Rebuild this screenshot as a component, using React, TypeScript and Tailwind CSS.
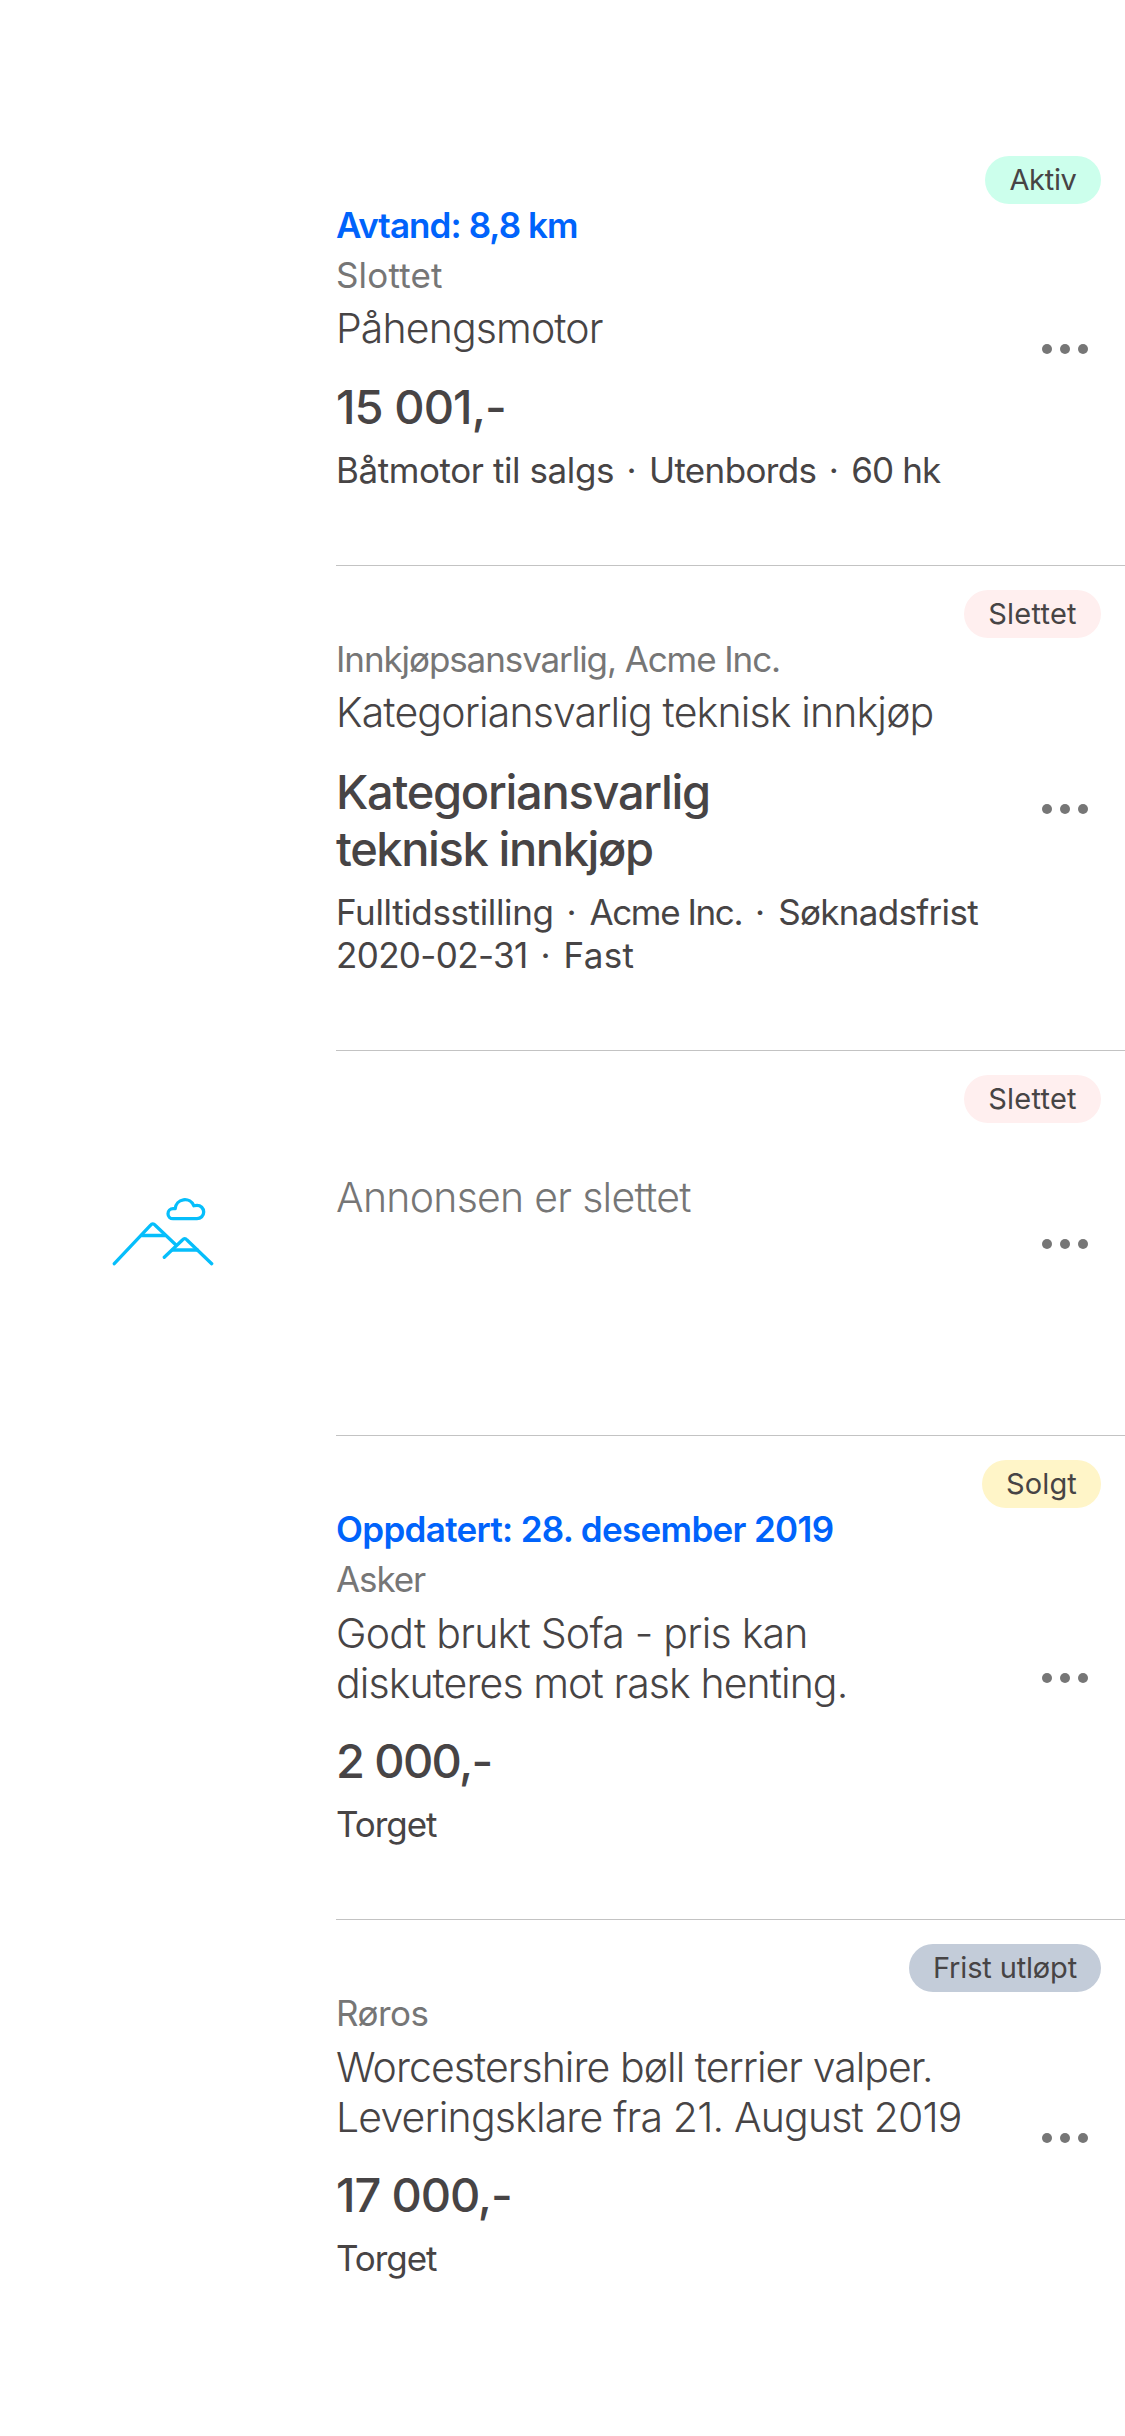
import { Fragment } from "react";
import clsx from "clsx";

type Segment = { text: string; tracking: string };

type Ad = {
  id: string;
  height: string;
  badge: { text: string; style: string };
  status?: Segment;
  location?: Segment;
  title: Segment[];
  titlePadding: string;
  price?: Segment[];
  pricePadding?: string;
  details?: Segment[][];
  dotWidth?: string;
  deleted?: boolean;
};

const ads: Ad[] = [
  {
    id: "motor",
    height: "h-[434px]",
    badge: { text: "Aktiv", style: "w-[116px] bg-[#ccffec] tracking-[-0.3px]" },
    status: { text: "Avtand: 8,8 km", tracking: "tracking-[-0.93px]" },
    location: { text: "Slottet", tracking: "tracking-[0.16px]" },
    title: [{ text: "Påhengsmotor", tracking: "tracking-[-0.88px]" }],
    titlePadding: "pt-[3px]",
    price: [{ text: "15 001,-", tracking: "tracking-[-0.93px]" }],
    pricePadding: "pt-[25px]",
    details: [
      [
        { text: "Båtmotor til salgs", tracking: "tracking-[-0.42px]" },
        { text: "Utenbords", tracking: "tracking-[-0.65px]" },
        { text: "60 hk", tracking: "tracking-[-0.9px]" },
      ],
    ],
    dotWidth: "w-[35px]",
  },
  {
    id: "job",
    height: "h-[485px]",
    badge: { text: "Slettet", style: "w-[137px] bg-[#ffefef] tracking-[0.26px]" },
    location: { text: "Innkjøpsansvarlig, Acme Inc.", tracking: "tracking-[-1.09px]" },
    title: [{ text: "Kategoriansvarlig teknisk innkjøp", tracking: "tracking-[-0.84px]" }],
    titlePadding: "pt-[3px]",
    price: [
      { text: "Kategoriansvarlig", tracking: "tracking-[-1.28px]" },
      { text: "teknisk innkjøp", tracking: "tracking-[-1.4px]" },
    ],
    pricePadding: "pt-[26px]",
    details: [
      [
        { text: "Fulltidsstilling", tracking: "tracking-[-0.37px]" },
        { text: "Acme Inc.", tracking: "tracking-[-1.4px]" },
        { text: "Søknadsfrist", tracking: "tracking-[-0.68px]" },
      ],
      [
        { text: "2020-02-31", tracking: "tracking-[-0.64px]" },
        { text: "Fast", tracking: "tracking-[0.36px]" },
      ],
    ],
    dotWidth: "w-[36px]",
  },
  {
    id: "deleted",
    height: "h-[385px]",
    badge: { text: "Slettet", style: "w-[137px] bg-[#ffefef] tracking-[0.26px]" },
    title: [{ text: "Annonsen er slettet", tracking: "tracking-[-0.73px]" }],
    titlePadding: "pt-[53px]",
    deleted: true,
  },
  {
    id: "sofa",
    height: "h-[484px]",
    badge: { text: "Solgt", style: "w-[119px] bg-[#fff5c8] tracking-[0.1px]" },
    status: { text: "Oppdatert: 28. desember 2019", tracking: "tracking-[-0.67px]" },
    location: { text: "Asker", tracking: "tracking-[-1.1px]" },
    title: [
      { text: "Godt brukt Sofa - pris kan", tracking: "tracking-[-0.75px]" },
      { text: "diskuteres mot rask henting.", tracking: "tracking-[-0.92px]" },
    ],
    titlePadding: "pt-[4px]",
    price: [{ text: "2 000,-", tracking: "tracking-[-1.65px]" }],
    pricePadding: "pt-[24px]",
    details: [[{ text: "Torget", tracking: "tracking-[-1.06px]" }]],
  },
  {
    id: "puppies",
    height: "h-[434px]",
    badge: { text: "Frist utløpt", style: "w-[192px] bg-[#c3ccd9] tracking-[-0.15px]" },
    location: { text: "Røros", tracking: "tracking-[-0.5px]" },
    title: [
      { text: "Worcestershire bøll terrier valper.", tracking: "tracking-[-0.96px]" },
      { text: "Leveringsklare fra 21. August 2019", tracking: "tracking-[-0.83px]" },
    ],
    titlePadding: "pt-[4px]",
    price: [{ text: "17 000,-", tracking: "tracking-[-1.13px]" }],
    pricePadding: "pt-[24px]",
    details: [[{ text: "Torget", tracking: "tracking-[-1.06px]" }]],
  },
];

function MountainIcon() {
  return (
    <svg
      className="h-[72px] w-[102px]"
      viewBox="0 0 102 72"
      fill="none"
      stroke="#06befb"
      strokeWidth="3.3"
      strokeLinecap="round"
      strokeLinejoin="round"
    >
      <path d="M61 23.7A5 5 0 0 1 61 13.7H63.2A9.7 9.7 0 0 1 81.9 10.8Q83.4 10.3 85 10.3A6.7 6.7 0 0 1 85 23.7Z" />
      <path d="M2.3 68.7L38.4 30.4Q40.7 27.4 43.2 30.2L64 50" />
      <path d="M29.7 40.5H53" />
      <path d="M52.3 62.3L70.4 45Q72.7 42.4 75 45L99.7 68.7" />
      <path d="M60.7 55H85.3" />
    </svg>
  );
}

function MoreButton() {
  return (
    <button aria-label="Flere valg" className="flex shrink-0 items-center gap-2 pt-px">
      <span className="size-2.5 rounded-full bg-[#767676]" />
      <span className="size-2.5 rounded-full bg-[#767676]" />
      <span className="size-2.5 rounded-full bg-[#767676]" />
    </button>
  );
}

function AdRow({ ad, last }: { ad: Ad; last: boolean }) {
  return (
    <li className={clsx("flex", ad.height)}>
      <div className="w-[336px] shrink-0 pt-36 pl-28">{ad.deleted && <MountainIcon />}</div>
      <div
        className={clsx(
          "relative flex flex-1 items-center justify-between pr-[37px]",
          !last && "border-b border-[#c3c3c3]",
        )}
      >
        <span
          className={clsx(
            "absolute top-6 right-6 flex h-12 items-center justify-center rounded-full text-[29px] whitespace-nowrap",
            ad.badge.style,
          )}
        >
          {ad.badge.text}
        </span>
        <div className="self-stretch pt-[68px] whitespace-nowrap">
          {ad.status && (
            <p className={clsx("text-[35px] leading-[50px] font-semibold text-[#0063fb]", ad.status.tracking)}>
              {ad.status.text}
            </p>
          )}
          {ad.location && (
            <p className={clsx("text-[35px] leading-[50px] text-[#767676]", ad.location.tracking)}>
              {ad.location.text}
            </p>
          )}
          <h2
            className={clsx(
              "text-[41px] leading-[50px] font-light",
              ad.titlePadding,
              ad.deleted && "text-[#767676]",
            )}
          >
            {ad.title.map((line) => (
              <span key={line.text} className={clsx("block", line.tracking)}>
                {line.text}
              </span>
            ))}
          </h2>
          {ad.price && (
            <p className={clsx("text-[47px] leading-[57px] font-medium", ad.pricePadding)}>
              {ad.price.map((line) => (
                <span key={line.text} className={clsx("block", line.tracking)}>
                  {line.text}
                </span>
              ))}
            </p>
          )}
          {ad.details && (
            <div className="pt-[14px] text-[35px] leading-[43px]">
              {ad.details.map((line) => (
                <p key={line[0].text} className="flex">
                  {line.map((part, i) => (
                    <Fragment key={part.text}>
                      {i > 0 && <span className={clsx("text-center", ad.dotWidth)}>·</span>}
                      <span className={part.tracking}>{part.text}</span>
                    </Fragment>
                  ))}
                </p>
              ))}
            </div>
          )}
        </div>
        <MoreButton />
      </div>
    </li>
  );
}

export default function App() {
  return (
    <main className="min-h-[2436px] w-[1125px] bg-white pt-[132px] font-['Inter',sans-serif] text-[#474445]">
      <ul>
        {ads.map((ad, i) => (
          <AdRow key={ad.id} ad={ad} last={i === ads.length - 1} />
        ))}
      </ul>
    </main>
  );
}
